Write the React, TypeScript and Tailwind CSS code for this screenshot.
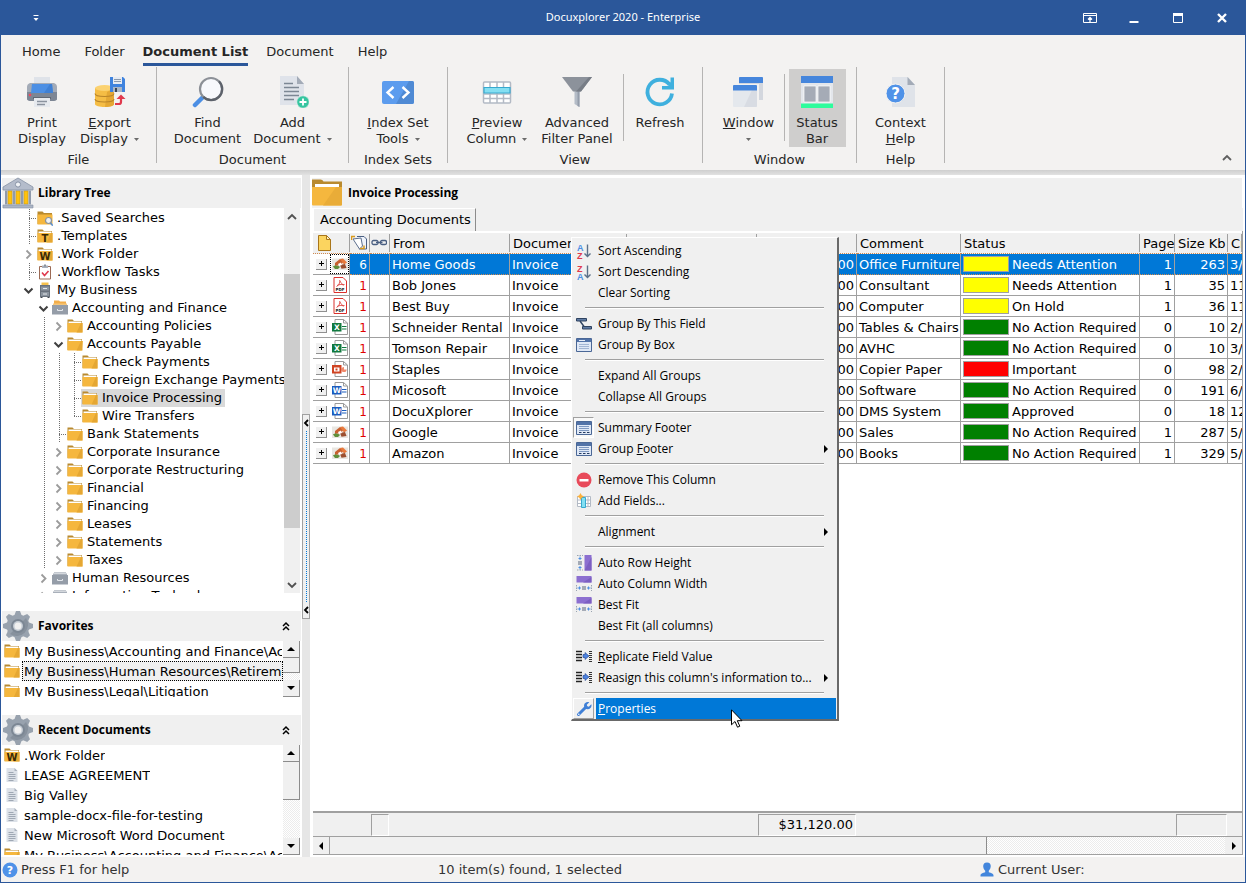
import type { ReactNode } from "react"
import clsx from "clsx"

/* ---------- icons ---------- */

interface IconProps {
  className?: string;
}

function FolderIcon({ className = "size-4", letter, open }: IconProps & { letter?: string; open?: boolean }) {
  return (
    <svg viewBox="0 0 16 16" className={clsx("shrink-0", className)} aria-hidden="true">
      <path d="M.5 1.500h5l1.500 1.500h8v11h-14.500z" fill="#b98a2f" />
      <path d="M1.500 3.500h13v3h-13z" fill="#fff" />
      <path d={open ? "M.5 5h15.300l-1 9.500h-14.300z" : "M.5 5h15v9.500h-15z"} fill="#f5b73e" />
      <path d="M9.500 14.500 14 5h1.500v9.500z" fill="#e5a733" />
      {letter && (
        <text x="8" y="13.500" fontSize="10" fontWeight="bold" textAnchor="middle" fill="#3a2a05" fontFamily="DejaVu Sans">
          {letter}
        </text>
      )}
    </svg>
  )
}

function BigFolderIcon() {
  return (
    <svg viewBox="0 0 32 32" className="size-8 shrink-0" aria-hidden="true">
      <path d="M0 2.500h8.500q2 0 3 2H30v8H0z" fill="#b98a2f" />
      <path d="M3 7h24v6H3z" fill="#fff" />
      <path d="M0 10h30v17.500q0 1-1 1H1q-1 0-1-1z" fill="#f5b73e" />
      <path d="M11 28.500 24 10h6v17.500q0 1-1 1z" fill="#e9ac38" />
    </svg>
  )
}

function SearchFolderIcon() {
  return (
    <svg viewBox="0 0 16 16" className="size-4 shrink-0" aria-hidden="true">
      <path d="M.5 1.500h5L7 3h8v11H.5z" fill="#b98a2f" />
      <path d="M.5 4.500h15v10H.5z" fill="#f5b73e" />
      <circle cx="11.500" cy="10.500" r="3" fill="#eef2f6" stroke="#8a929c" strokeWidth="1.200" />
      <path d="m13.500 13 2.300 2.600" stroke="#5b8fd0" strokeWidth="1.600" />
    </svg>
  )
}

function TaskIcon() {
  return (
    <svg viewBox="0 0 16 16" className="size-4 shrink-0" aria-hidden="true">
      <path d="M2.500 2.500h11v12.500h-11z" fill="#fff" stroke="#9b6a55" />
      <path d="M5 1.500h6v2.500H5z" fill="#a9b0ba" />
      <path d="M7 .5h2v2H7z" fill="#8a929c" />
      <path d="m5 8.500 2.500 3 4-4.500" fill="none" stroke="#e0394d" strokeWidth="1.600" />
    </svg>
  )
}

function CabinetIcon() {
  return (
    <svg viewBox="0 0 16 16" className="size-4 shrink-0" aria-hidden="true">
      <path d="M4.500.5h7v3h-7z" fill="#f5c04d" />
      <path d="M3 3h10v12H3z" fill="#68717c" />
      <path d="M4 4.500h8v4H4zM4 10h8v4H4z" fill="#8b949f" />
      <path d="M6 6h4v1H6zM6 11.500h4v1H6z" fill="#e3e7ec" />
      <path d="M3.500 15h2v1h-2zM10.500 15h2v1h-2z" fill="#40464e" />
    </svg>
  )
}

function DrawerIcon({ open }: { open?: boolean }) {
  return (
    <svg viewBox="0 0 16 16" className="size-4 shrink-0" aria-hidden="true">
      {open ? <path d="M2 .5h5l1 1h6v3H2z" fill="#f3ae4a" /> : <path d="M2 2h12v1H2z" fill="#c3c8cf" />}
      <path d="M1 3.500h14v2H1z" fill={open ? "#f5c67a" : "#a9b0ba"} />
      <path d="M0 5h16v9.500H0z" fill="#959da8" />
      <path d="M5.500 9v1.500h5V9" fill="none" stroke="#e3e7ec" />
    </svg>
  )
}

function DocIcon() {
  return (
    <svg viewBox="0 0 16 16" className="size-4 shrink-0" aria-hidden="true">
      <path d="M2.500 1h8l3 3v11h-11z" fill="#dce1e8" />
      <path d="M10.500 1v3h3z" fill="#aab2bd" />
      <path d="M4.500 5.500h5M4.500 7.500h7M4.500 9.500h7M4.500 11.500h7M4.500 13.500h5" stroke="#8f99a6" strokeWidth=".8" />
    </svg>
  )
}

function BankIcon() {
  return (
    <svg viewBox="0 0 32 32" className="size-8 shrink-0" aria-hidden="true">
      <path d="M3 12h26v16H3z" fill="#c3cad6" />
      <path d="M16 1 31 10v3H1v-3z" fill="#b4bccb" stroke="#8792a5" strokeWidth=".8" />
      <circle cx="16" cy="7.500" r="2.600" fill="#eff2f6" stroke="#8792a5" />
      <path d="M6 14h4v13H6zM14 14h4v13h-4zM22 14h4v13h-4z" fill="#ffc20d" stroke="#c79a20" strokeWidth=".6" />
      <path d="M3 14h2v13H3zM11 14h2v13h-2zM19 14h2v13h-2zM27 14h2v13h-2z" fill="#8f9aac" />
      <path d="M1 28h30v3H1z" fill="#aab4c4" stroke="#8792a5" strokeWidth=".6" />
    </svg>
  )
}

function GearIcon() {
  return (
    <svg viewBox="0 0 32 32" className="size-8 shrink-0" aria-hidden="true">
      {[0, 45, 90, 135].map((angle) => (
        <path key={angle} d="m12.500 5 1.500-4h4l1.500 4v22L18 31h-4l-1.500-4z" fill="#98a2ae" transform={`rotate(${angle} 16 16)`} />
      ))}
      <circle cx="16" cy="16" r="11.500" fill="#98a2ae" />
      <path d="m8 24 16-16a11.500 11.500 0 0 1-16 16z" fill="#87919d" />
      <circle cx="16" cy="16" r="7" fill="#7c8794" />
      <circle cx="16" cy="16" r="5" fill="#c5ccd4" />
      <circle cx="16" cy="16" r="3.500" fill="#f0f0f0" />
    </svg>
  )
}

function PrinterIcon() {
  return (
    <svg viewBox="0 0 32 32" className="size-8" aria-hidden="true">
      <path d="M8 1h16v9H8z" fill="#dfe3e9" />
      <path d="M4 7h24q3 1 3 4v13H1V11q0-3 3-4z" fill="#a3abb7" />
      <path d="M1 16h30v6q0 3-3 3H4q-3 0-3-3z" fill="#7d8694" />
      <path d="M6 8h20l1 9H5z" fill="#4c8fe4" />
      <path d="m18 17 6-9h2l1 9z" fill="#3f80d4" />
      <circle cx="4" cy="19" r="1.300" fill="#f3455c" />
      <path d="M7 21h18v2H7z" fill="#5f6875" />
      <path d="M8 22h16v9H8z" fill="#e6e9ee" />
      <path d="M11 25.500h10M11 28.500h8" stroke="#8a929e" strokeWidth="1.300" />
    </svg>
  )
}

function ExportIcon() {
  return (
    <svg viewBox="0 0 32 32" className="size-8" aria-hidden="true">
      <path d="M1 12v16c0 4 19 4 19 0V12z" fill="#f5bd45" />
      <path d="M11 31c5 0 9-1 9-3V12l-7 4z" fill="#e4a834" />
      <ellipse cx="10.500" cy="12" rx="9.500" ry="3" fill="#fbd271" />
      <path d="M1 17.500c0 4 19 4 19 0M1 23c0 4 19 4 19 0" fill="none" stroke="#b9852a" strokeWidth="1.100" />
      <path d="M16 1h13l2 2v13H16z" fill="#3f83de" />
      <path d="M19 1h9v7h-9z" fill="#e6ebf2" />
      <path d="M20 3.500h7M20 5.500h7" stroke="#8a99ad" />
      <path d="M19 11h9v5h-9z" fill="#aab6c6" />
      <path d="M21 12h2v4h-2z" fill="#3b4654" />
      <path d="M21 28h4q2 0 2-2v-5" fill="none" stroke="#e0394d" strokeWidth="2.200" />
      <path d="m22.500 23 4.500-4.500 4.500 4.500z" fill="#e0394d" />
    </svg>
  )
}

function FindIcon() {
  return (
    <svg viewBox="0 0 32 32" className="size-8" aria-hidden="true">
      <path d="m10 22-7 7" stroke="#4c8fe4" strokeWidth="4.500" strokeLinecap="round" />
      <circle cx="19" cy="13" r="11" fill="#f7f8fc" stroke="#8c9097" strokeWidth="2.200" />
      <path d="M27 5.200A11 11 0 0 1 11.300 20.900" fill="none" stroke="#5d626b" strokeWidth="2.200" />
    </svg>
  )
}

function AddDocIcon() {
  return (
    <svg viewBox="0 0 32 32" className="size-8" aria-hidden="true">
      <path d="M3 0h17l7 8v21H3z" fill="#dfe3ea" />
      <path d="M20 0v8h7z" fill="#a3abb7" />
      <path d="M7 7.500h9M7 11.500h15M7 15.500h15M7 19.500h15M7 23.500h10" stroke="#7c8794" strokeWidth="1.600" />
      <circle cx="26" cy="26" r="6.200" fill="#36c5a0" stroke="#f3f2f1" strokeWidth=".6" />
      <path d="M26 22.500v7M22.500 26h7" stroke="#fff" strokeWidth="1.800" />
    </svg>
  )
}

function CodeIcon() {
  return (
    <svg viewBox="0 0 32 32" className="size-8" aria-hidden="true">
      <rect x="0" y="5" width="32" height="23" rx="2" fill="#5c9cee" />
      <path d="M14 28 27 5h3q2 0 2 2v19q0 2-2 2z" fill="#4f8ad4" />
      <path d="m11.500 11-6 5.500 6 5.500M20.500 11l6 5.500-6 5.500" fill="none" stroke="#fff" strokeWidth="2.400" />
    </svg>
  )
}

function GridIcon() {
  return (
    <svg viewBox="0 0 32 32" className="size-8" aria-hidden="true">
      <rect x="2.500" y="6" width="27" height="21" rx="1" fill="#fff" stroke="#b3bac5" strokeWidth="1.500" />
      <path d="M9 6v21M16 6v21M22.500 6v21M3 18h27M3 22.500h27" stroke="#b3bac5" strokeWidth="1.500" />
      <path d="M3 11.500h26V17H3z" fill="#84dff2" stroke="#37a9cf" strokeWidth="1.200" />
    </svg>
  )
}

function FunnelIcon() {
  return (
    <svg viewBox="0 0 32 32" className="size-8" aria-hidden="true">
      <path d="M13.500 14h5v17l-5-3z" fill="#b4bcc7" />
      <path d="M16.500 14h2v17l-2-1z" fill="#949dab" />
      <path d="M1 1h30l-11 14.500h-8z" fill="#8c929b" />
      <path d="M31 1H28L15 15.500h5z" fill="#777d86" />
    </svg>
  )
}

function RefreshIcon() {
  return (
    <svg viewBox="0 0 32 32" className="size-8" aria-hidden="true">
      <path d="M28 17.500A12.300 12.300 0 1 1 25.500 8.500" fill="none" stroke="#3fb0de" strokeWidth="3.800" />
      <path d="M30 1.500v12H18V10h6l2.500-4V1.500z" fill="#3fb0de" />
    </svg>
  )
}

function WindowsIcon() {
  return (
    <svg viewBox="0 0 32 32" className="size-8" aria-hidden="true">
      <path d="M6 2q0-1 1-1h22q1 0 1 1v22H6z" fill="#d3d7de" />
      <path d="M6 2q0-1 1-1h22q1 0 1 1v5H6z" fill="#4686dc" />
      <path d="M0 8h26v24H0z" fill="#f3f2f1" />
      <path d="M0 10q0-1 1-1h22q1 0 1 1v20q0 1-1 1H1q-1 0-1-1z" fill="#e4e8ed" />
      <path d="m11 31 8-17h5v16q0 1-1 1z" fill="#d8dce3" />
      <path d="M0 10q0-1 1-1h22q1 0 1 1v4.500H0z" fill="#4686dc" />
    </svg>
  )
}

function StatusBarIcon() {
  return (
    <svg viewBox="0 0 32 32" className="size-8" aria-hidden="true">
      <path d="M0 1h32v31H0z" fill="#e3e6eb" />
      <path d="M0 0h32v7H0z" fill="#4686dc" />
      <path d="M3 10h12v16H3zM17 10h12v16H17z" fill="#a5abb6" stroke="#fff" strokeWidth=".7" />
      <path d="M0 27.500h32V32H0z" fill="#2dfc9c" />
    </svg>
  )
}

function ContextHelpIcon() {
  return (
    <svg viewBox="0 0 32 32" className="size-8" aria-hidden="true">
      <path d="M7 1h16l7 8v22H7z" fill="#dfe3e9" />
      <path d="M22.500 1v8H30z" fill="#a3abb7" />
      <circle cx="10.500" cy="17.500" r="9.500" fill="#4f92e8" stroke="#f3f2f1" />
      <text x="10.500" y="23" fontSize="15" fontWeight="bold" textAnchor="middle" fill="#fff" fontFamily="DejaVu Sans">?</text>
    </svg>
  )
}

function HelpIcon() {
  return (
    <svg viewBox="0 0 16 16" className="size-4 shrink-0" aria-hidden="true">
      <circle cx="8" cy="8" r="7.500" fill="#4f92e8" />
      <text x="8" y="12" fontSize="11" fontWeight="bold" textAnchor="middle" fill="#fff" fontFamily="DejaVu Sans">?</text>
    </svg>
  )
}

function UserIcon() {
  return (
    <svg viewBox="0 0 16 16" className="size-4 shrink-0" aria-hidden="true">
      <path d="M8 .5c5.500 0 4 6.500 1.800 8.200v1.500c2.200.8 4.700 1.300 4.700 3.300v1h-13v-1c0-2 2.500-2.500 4.700-3.300V8.700C4 7 2.500.5 8 .5z" fill="#4386dc" />
    </svg>
  )
}

function Chevron({ dir, className }: { dir: "up" | "down" | "right" | "left"; className?: string }) {
  const paths = {
    up: "m4 10 4-4 4 4",
    down: "m4 6 4 4 4-4",
    right: "m6 4 4 4-4 4",
    left: "m10 5-3 3 3 3",
  }
  return (
    <svg viewBox="0 0 16 16" className={clsx("size-4 shrink-0", className)} aria-hidden="true">
      <path d={paths[dir]} fill="none" stroke="currentColor" strokeWidth="1.800" />
    </svg>
  )
}

function Triangle({ dir }: { dir: "up" | "down" | "right" | "left" }) {
  const paths = {
    up: "M0 6h8L4 2z",
    down: "M0 2h8L4 6z",
    right: "M2 0v8l4-4z",
    left: "M6 0v8L2 4z",
  }
  return (
    <svg viewBox="0 0 8 8" className="size-2 shrink-0" aria-hidden="true">
      <path d={paths[dir]} fill="currentColor" />
    </svg>
  )
}

function DropArrow({ className }: IconProps) {
  return (
    <svg viewBox="0 0 5 3" className={clsx("inline-block h-[3px] w-[5px] align-middle", className)} aria-hidden="true">
      <path d="M0 0h5L2.500 3z" fill="#6b6b6b" />
    </svg>
  )
}

/* ---------- grid file icons ---------- */

function PhotoIcon() {
  return (
    <svg viewBox="0 0 16 16" className="size-4" aria-hidden="true">
      <path d="M0 2.500h16V14H0z" fill="#e9e6e1" />
      <path d="m3 7 5-4 4 2-3 4-6 1z" fill="#c8602f" />
      <path d="m8 3 3-.5 4 4-3 2z" fill="#e8793c" />
      <path d="M1 10.500c2-2 6-1 7 .5l-2 2H3z" fill="#5f8f3a" />
      <path d="m8 9 5-1 1.500 4-5 .8z" fill="#9c4f30" />
      <path d="m6 8 3-1.500 1 2.500-3 1z" fill="#fff" />
    </svg>
  )
}

function PdfIcon() {
  return (
    <svg viewBox="0 0 16 16" className="size-4" aria-hidden="true">
      <path d="M2 .5h9l3.500 3.500v11.500H2z" fill="#fff" stroke="#d9302c" />
      <path d="M7.500 3c2 4 3 5 5 4.500M8 4c-.5 3-2 5-3.500 5.500M5 8.500c2-1 4-1.500 7-.5" fill="none" stroke="#d9302c" strokeWidth=".8" />
      <text x="8" y="14" fontSize="4" fontWeight="bold" textAnchor="middle" fill="#222" fontFamily="DejaVu Sans">PDF</text>
    </svg>
  )
}

function OfficeIcon({ color, letter }: { color: string; letter: string }) {
  return (
    <svg viewBox="0 0 16 16" className="size-4" aria-hidden="true">
      <path d="M3 .5h8.500L15.500 4v11.500H3z" fill="#fff" stroke="#9a9a9a" />
      <path d="M11.500.5V4h4" fill="none" stroke="#9a9a9a" />
      <path d="M10 7.500h4.500M10 10h4.500" stroke={color} strokeWidth="1.200" />
      <path d="M0 4h9.500v8.500H0z" fill={color} />
      <text x="4.800" y="11" fontSize="7.500" fontWeight="bold" textAnchor="middle" fill="#fff" fontFamily="DejaVu Sans">{letter}</text>
    </svg>
  )
}

function SlidesIcon() {
  return (
    <svg viewBox="0 0 16 16" className="size-4" aria-hidden="true">
      <path d="M3 .5h8.500L15.500 4v11.500H3z" fill="#fff" stroke="#9a9a9a" />
      <path d="M11.500.5V4h4" fill="none" stroke="#9a9a9a" />
      <circle cx="12" cy="8.500" r="2.600" fill="#f08a6c" />
      <path d="M12 8.500V5.500h3v3z" fill="#fff" />
      <path d="M0 4h9.500v8.500H0z" fill="#d04423" />
      <path d="M2 6.500h5.500v4H2z" fill="#fff" />
      <path d="M3.500 7.500h2v2h-2z" fill="#d04423" />
    </svg>
  )
}

const fileIcons: Record<string, ReactNode> = {
  photo: <PhotoIcon />,
  pdf: <PdfIcon />,
  excel: <OfficeIcon color="#10793f" letter="X" />,
  slides: <SlidesIcon />,
  word: <OfficeIcon color="#1b5cbe" letter="W" />,
}

/* ---------- context menu icons ---------- */

function SortIcon({ desc }: { desc?: boolean }) {
  return (
    <svg viewBox="0 0 16 16" className="size-4" aria-hidden="true">
      <text x="1" y="7.500" fontSize="9" fontWeight="bold" fill={desc ? "#e0394d" : "#4c8fe4"} fontFamily="Liberation Sans">{desc ? "Z" : "A"}</text>
      <text x="1" y="15.500" fontSize="9" fontWeight="bold" fill={desc ? "#4c8fe4" : "#e0394d"} fontFamily="Liberation Sans">{desc ? "A" : "Z"}</text>
      <path d="M11.500 1.500v12M8.500 10.500l3 3 3-3" fill="none" stroke="#5b7089" strokeWidth="1.400" />
    </svg>
  )
}

function GroupFieldIcon() {
  return (
    <svg viewBox="0 0 16 16" className="size-4" aria-hidden="true">
      <path d="M.5 2.500h10v2.500H.5zM6.500 10.500h9V13h-9z" fill="#5f7ba3" stroke="#2f4260" />
      <path d="m4 5 4 5.500" stroke="#2f4260" strokeWidth="1.400" />
    </svg>
  )
}

function PanelIcon({ footer }: { footer?: boolean }) {
  return (
    <svg viewBox="0 0 16 16" className="size-4" aria-hidden="true">
      <path d="M.5 1.500h15v13H.5z" fill="#dfe8f6" stroke="#4a6796" />
      <path d="M1 2h14v3H1z" fill="#5273a8" />
      {footer ? (
        <>
          <path d="M3 6.500h10M3 8.500h10M3 10.500h10" stroke="#7d97c0" />
          <path d="M3 12.500h2.500M7 12.500h2.500M11 12.500h2.500" stroke="#23395f" />
        </>
      ) : (
        <>
          <path d="M3 3.500h6" stroke="#e8eef8" />
          <path d="M3 7.500h10M3 9.500h10M3 11.500h10" stroke="#a3b6d4" />
        </>
      )}
    </svg>
  )
}

function RemoveIcon() {
  return (
    <svg viewBox="0 0 16 16" className="size-4" aria-hidden="true">
      <circle cx="8" cy="8" r="7.500" fill="#e84a5a" />
      <path d="M3.500 7h9v2.500h-9z" fill="#fff" />
    </svg>
  )
}

function AddFieldsIcon() {
  return (
    <svg viewBox="0 0 16 16" className="size-4" aria-hidden="true">
      <path d="M1.500 3.500h13v10h-13zM1.500 7h13M1.500 10.500h13M12 3.500v10" fill="#fff" stroke="#b3bac5" />
      <path d="M5.500 4.500h4v10h-4z" fill="#84dff2" stroke="#37a9cf" />
      <path d="m4.500 0 1.200 2.300L8 3.500 5.700 4.700 4.500 7 3.300 4.700 1 3.500l2.300-1.200z" fill="#fbb03b" />
    </svg>
  )
}

function RowHeightIcon() {
  return (
    <svg viewBox="0 0 16 16" className="size-4" aria-hidden="true">
      <path d="M8.500 0h7v15.500h-7z" fill="#8c6fd0" />
      <path d="M8.500 15.500 15.500 2v13.500z" fill="#7c5fc2" />
      <path d="M1 .5h6M1 15h6" stroke="#9aa4b0" strokeDasharray="1.500 1" />
      <path d="M2 6h4v4H2z" fill="#a5abb6" />
      <path d="M4 1.500V5M4 11v3.500M2.500 3.500h3M2.500 12.500h3" stroke="#4c8fe4" />
    </svg>
  )
}

function ColumnWidthIcon() {
  return (
    <svg viewBox="0 0 16 16" className="size-4" aria-hidden="true">
      <path d="M.5 0h15v6.500H.5z" fill="#8c6fd0" />
      <path d="M7 6.500 15.500 1v5.500z" fill="#7c5fc2" />
      <path d="M.5 9v6M15.500 9v6" stroke="#9aa4b0" strokeDasharray="1.500 1" />
      <path d="M6 10h4v4H6z" fill="#a5abb6" />
      <path d="M1.500 12H5M11 12h3.500M3.500 10.500v3M12.500 10.500v3" stroke="#4c8fe4" />
    </svg>
  )
}

function ReplicateIcon() {
  return (
    <svg viewBox="0 0 16 16" className="size-4" aria-hidden="true">
      <path d="M0 2.500h6M0 5.500h6M0 8.500h6M0 11.500h6" stroke="#222" strokeWidth="1.300" />
      <path d="M13 2.500h3M13 4.500h3M13 6.500h3M13 8.500h3M13 10.500h3M13 12.500h3" stroke="#333" />
      <path d="M7 5.500h2V3.500l4 3.500-4 3.500v-2H7z" fill="#4d83e0" stroke="#1d3f8e" strokeWidth=".6" />
    </svg>
  )
}

function WrenchIcon() {
  return (
    <svg viewBox="0 0 16 16" className="size-4" aria-hidden="true">
      <path d="M2.500 13.500 10 6" stroke="#3f7fd6" strokeWidth="3" strokeLinecap="round" />
      <path d="M13.300 1.200 10.800 3.700l.4 1.600 1.600.4 2.500-2.500c.9 2.700-1 5-3.600 5-2.300 0-4-2-3.600-4.200.3-2.300 2.700-3.800 5.200-2.800z" fill="#3f7fd6" />
      <circle cx="2.800" cy="13.200" r=".8" fill="#fff" />
    </svg>
  )
}

/* ---------- ribbon ---------- */

const ribbonTabs = ["Home", "Folder", "Document List", "Document", "Help"]

interface RibbonButtonProps {
  icon: ReactNode;
  children: ReactNode;
  className: string;
  active?: boolean;
}

function RibbonButton({ icon, children, className, active }: RibbonButtonProps) {
  return (
    <button
      type="button"
      aria-pressed={active}
      className={clsx("flex h-[78px] shrink-0 flex-col items-center pt-[7px] leading-4 whitespace-nowrap", active && "bg-[#cfcecd]", className)}
    >
      {icon}
      <span className="mt-[7px] text-center">{children}</span>
    </button>
  )
}

function RibbonGroup({ label, className, children }: { label: string; className: string; children: ReactNode }) {
  return (
    <>
      <section aria-label={label} className={clsx("flex shrink-0 flex-col", className)}>
        <div className="flex justify-center pt-0.5">{children}</div>
        <span className="mt-[5px] text-center leading-4">{label}</span>
      </section>
      <div className="h-24 w-px shrink-0 bg-[#b5b4b3]" />
    </>
  )
}

function RibbonDivider({ className }: IconProps) {
  return <div className={clsx("mt-[5px] h-[67px] w-px shrink-0 bg-[#b5b4b3]", className)} />
}

function Ribbon() {
  return (
    <header className="shrink-0 bg-[#f3f2f1] text-[#262626]">
      <nav className="flex h-8 items-center pl-[9px]">
        {ribbonTabs.map((tab) => {
          const selected = tab === "Document List"
          return (
            <button key={tab} type="button" className={clsx("h-8 pt-0.5", selected ? "px-1.5 font-bold" : "px-3")}>
              <span className={clsx("block h-7 leading-7", selected && "border-b-[3px] border-[#2b579a]")}>{tab}</span>
            </button>
          )
        })}
      </nav>
      <div className="flex h-[103px]">
        <RibbonGroup label="File" className="w-[155px]">
          <RibbonButton icon={<PrinterIcon />} className="w-[62px]">Print<br />Display</RibbonButton>
          <RibbonButton icon={<ExportIcon />} className="w-[73px]"><u>E</u>xport<br />Display <DropArrow className="ml-0.5" /></RibbonButton>
        </RibbonGroup>
        <RibbonGroup label="Document" className="w-[191px]">
          <RibbonButton icon={<FindIcon />} className="w-[80px]">Find<br />Document</RibbonButton>
          <RibbonButton icon={<AddDocIcon />} className="w-[90px]">Add<br />Document <DropArrow className="ml-0.5" /></RibbonButton>
        </RibbonGroup>
        <RibbonGroup label="Index Sets" className="w-[98px]">
          <RibbonButton icon={<CodeIcon />} className="w-[74px]"><u>I</u>ndex Set<br />Tools <DropArrow className="ml-0.5" /></RibbonButton>
        </RibbonGroup>
        <RibbonGroup label="View" className="w-[254px]">
          <RibbonButton icon={<GridIcon />} className="w-[76px]"><u>P</u>review<br />Column <DropArrow className="ml-0.5" /></RibbonButton>
          <RibbonButton icon={<FunnelIcon />} className="w-[84px]">Advanced<br />Filter Panel</RibbonButton>
          <RibbonDivider className="ml-1" />
          <RibbonButton icon={<RefreshIcon />} className="w-[67px] pl-[5px]">Refresh</RibbonButton>
        </RibbonGroup>
        <RibbonGroup label="Window" className="w-[153px]">
          <RibbonButton icon={<WindowsIcon />} className="w-[70px]"><u>W</u>indow<br /><DropArrow /></RibbonButton>
          <RibbonDivider className="mr-1" />
          <RibbonButton icon={<StatusBarIcon />} className="w-[57px]" active>Status<br />Bar</RibbonButton>
        </RibbonGroup>
        <RibbonGroup label="Help" className="w-[87px]">
          <RibbonButton icon={<ContextHelpIcon />} className="w-[60px]">Context<br /><u>H</u>elp</RibbonButton>
        </RibbonGroup>
        <button type="button" aria-label="Collapse ribbon" className="mr-2.5 mb-1 ml-auto self-end text-[#5f5f5f]">
          <Chevron dir="up" />
        </button>
      </div>
      <div className="h-[5px] bg-linear-to-b from-[#cfcfcf] to-[#e2e2e2]" />
    </header>
  )
}

/* ---------- sidebar ---------- */

// guides: one letter per tree level, "|" line, "+" branch, "L" last branch, ">" collapsed, "v" expanded, " " blank
const treeRows: { guides: string; icon: ReactNode; label: string; selected?: boolean }[] = [
  { guides: "+", icon: <SearchFolderIcon />, label: ".Saved Searches" },
  { guides: "+", icon: <FolderIcon letter="T" />, label: ".Templates" },
  { guides: ">", icon: <FolderIcon letter="W" />, label: ".Work Folder" },
  { guides: "+", icon: <TaskIcon />, label: ".Workflow Tasks" },
  { guides: "v", icon: <CabinetIcon />, label: "My Business" },
  { guides: " v", icon: <DrawerIcon open />, label: "Accounting and Finance" },
  { guides: " |>", icon: <FolderIcon />, label: "Accounting Policies" },
  { guides: " |v", icon: <FolderIcon open />, label: "Accounts Payable" },
  { guides: " ||+", icon: <FolderIcon />, label: "Check Payments" },
  { guides: " ||+", icon: <FolderIcon />, label: "Foreign Exchange Payments" },
  { guides: " ||+", icon: <FolderIcon />, label: "Invoice Processing", selected: true },
  { guides: " ||L", icon: <FolderIcon />, label: "Wire Transfers" },
  { guides: " |+", icon: <FolderIcon />, label: "Bank Statements" },
  { guides: " |>", icon: <FolderIcon />, label: "Corporate Insurance" },
  { guides: " |>", icon: <FolderIcon />, label: "Corporate Restructuring" },
  { guides: " |>", icon: <FolderIcon />, label: "Financial" },
  { guides: " |>", icon: <FolderIcon />, label: "Financing" },
  { guides: " |>", icon: <FolderIcon />, label: "Leases" },
  { guides: " |>", icon: <FolderIcon />, label: "Statements" },
  { guides: " |>", icon: <FolderIcon />, label: "Taxes" },
  { guides: " >", icon: <DrawerIcon />, label: "Human Resources" },
  { guides: " >", icon: <DrawerIcon />, label: "Information Technology" },
]

function TreeGuide({ kind }: { kind: string }) {
  return (
    <svg viewBox="0 0 15 18" className="h-[18px] w-[15px] shrink-0" aria-hidden="true">
      {(kind === "|" || kind === "+") && <path d="M8.500 0v18" stroke="#6e6e6e" strokeDasharray="1 1" />}
      {kind === "L" && <path d="M8.500 0v10" stroke="#6e6e6e" strokeDasharray="1 1" />}
      {(kind === "+" || kind === "L") && <path d="M8 9.500h7" stroke="#6e6e6e" strokeDasharray="1 1" />}
      {kind === ">" && <path d="m5.500 5.500 4 4-4 4" fill="none" stroke="#9b9b9b" strokeWidth="1.800" />}
      {kind === "v" && <path d="m3.500 7.500 4 4 4-4" fill="none" stroke="#404040" strokeWidth="2" />}
    </svg>
  )
}

function PanelHeader({ icon, title, collapsible }: { icon: ReactNode; title: string; collapsible?: boolean }) {
  return (
    <div className="mx-px flex h-[30px] shrink-0 items-center bg-[#f0f0f0] font-['Open_Sans',sans-serif] text-xs font-bold text-black">
      {icon}
      <h2 className="ml-1 flex-1">{title}</h2>
      {collapsible && (
        <button type="button" aria-label={`Collapse ${title}`} className="mr-[7px]">
          <svg viewBox="0 0 16 16" className="size-4" aria-hidden="true">
            <path d="m5 8 3-3 3 3M5 12l3-3 3 3" fill="none" stroke="#000" strokeWidth="1.500" />
          </svg>
        </button>
      )}
    </div>
  )
}

function ClassicScrollbar({ thumb }: { thumb: string }) {
  return (
    <div className="mr-0.5 flex w-[17px] shrink-0 flex-col bg-[repeating-conic-gradient(#fff_0_25%,#ececec_0_50%)] bg-size-[2px_2px]">
      <button type="button" aria-label="Scroll up" className="flex h-[17px] items-center justify-center border-r border-b border-[#8c8c8c] bg-[#f0f0f0]">
        <Triangle dir="up" />
      </button>
      <div className={clsx("border-r border-b border-[#8c8c8c] bg-[#f0f0f0]", thumb)} />
      <button type="button" aria-label="Scroll down" className="mt-auto flex h-[17px] items-center justify-center border-r border-b border-[#8c8c8c] bg-[#f0f0f0]">
        <Triangle dir="down" />
      </button>
    </div>
  )
}

function LinkList({ rows, thumb, className }: { rows: { icon: ReactNode; label: string; focused?: boolean }[]; thumb: string; className: string }) {
  return (
    <div className={clsx("flex shrink-0", className)}>
      <ul className="min-w-0 flex-1 overflow-hidden">
        {rows.map((row) => (
          <li key={row.label}>
            <button type="button" className="flex h-5 w-full items-center pl-[3px] text-left">
              {row.icon}
              <span
                className={clsx(
                  "ml-0.5 h-5 min-w-0 overflow-hidden border border-dotted pl-px leading-5 whitespace-nowrap",
                  row.focused ? "flex-1 border-black bg-[#f0f0f0]" : "border-transparent"
                )}
              >
                {row.label}
              </span>
            </button>
          </li>
        ))}
      </ul>
      <ClassicScrollbar thumb={thumb} />
    </div>
  )
}

const favorites = [
  { icon: <FolderIcon />, label: "My Business\\Accounting and Finance\\Accounts Payable" },
  { icon: <FolderIcon />, label: "My Business\\Human Resources\\Retirement", focused: true },
  { icon: <FolderIcon />, label: "My Business\\Legal\\Litigation" },
]

const recentDocuments = [
  { icon: <FolderIcon letter="W" />, label: ".Work Folder" },
  { icon: <DocIcon />, label: "LEASE AGREEMENT" },
  { icon: <DocIcon />, label: "Big Valley" },
  { icon: <DocIcon />, label: "sample-docx-file-for-testing" },
  { icon: <DocIcon />, label: "New Microsoft Word Document" },
  { icon: <FolderIcon />, label: "My Business\\Accounting and Finance\\Accounts Payable" },
]

function Sidebar() {
  return (
    <aside className="flex w-[301px] shrink-0 flex-col bg-white pt-[3px] pb-0.5 text-black">
      <PanelHeader icon={<BankIcon />} title="Library Tree" />
      <div className="flex min-h-0 flex-1">
        <ul role="tree" className="min-w-0 flex-1 overflow-hidden pt-px pl-5">
          {treeRows.map((row) => (
            <li key={row.label} role="treeitem" aria-selected={row.selected} className="flex h-[18px] whitespace-nowrap">
              {row.guides.split("").map((kind, i) => (
                <TreeGuide key={i} kind={kind} />
              ))}
              <span className={clsx("flex items-center gap-1 pl-px leading-[18px]", row.selected && "bg-[#d9d9d9] pr-[3px]")}>
                {row.icon}
                {row.label}
              </span>
            </li>
          ))}
        </ul>
        <div className="mr-0.5 flex w-4 shrink-0 flex-col items-center bg-[#f0f0f0] pt-px text-[#505050]">
          <button type="button" aria-label="Scroll tree up" className="mb-[49px]">
            <Chevron dir="up" />
          </button>
          <div className="h-[254px] w-full bg-[#cdcdcd]" />
          <button type="button" aria-label="Scroll tree down" className="mt-auto">
            <Chevron dir="down" />
          </button>
        </div>
      </div>
      <div className="h-[18px] shrink-0" />
      <PanelHeader icon={<GearIcon />} title="Favorites" collapsible />
      <LinkList rows={favorites} thumb="h-[15px]" className="h-14" />
      <div className="h-[18px] shrink-0" />
      <PanelHeader icon={<GearIcon />} title="Recent Documents" collapsible />
      <LinkList rows={recentDocuments} thumb="h-[38px]" className="h-[110px]" />
    </aside>
  )
}

function Splitter() {
  return (
    <div className="flex w-2 shrink-0 flex-col items-center bg-[#e6e6e6]">
      <div className="flex-239" />
      <button type="button" aria-label="Hide sidebar" className="flex h-[205px] w-2 shrink-0 flex-col items-center justify-between border border-[#a0a0a0] bg-[#f0f0f0] text-black">
        <Chevron dir="left" />
        <span className="w-0 flex-1 border-l border-dotted border-[#0078d7]" />
        <Chevron dir="left" />
      </button>
      <div className="flex-238" />
    </div>
  )
}

/* ---------- document grid ---------- */

const columns = [
  { id: "file", className: "w-[37px]" },
  { id: "versions", className: "w-5" },
  { id: "links", className: "w-5" },
  { id: "from", className: "w-[120px]" },
  { id: "document", className: "w-[117px]" },
  { id: "date", className: "w-[130px]" },
  { id: "amount", className: "w-[100px]" },
  { id: "comment", className: "w-[104px]" },
  { id: "status", className: "w-[179px]" },
  { id: "pages", className: "w-[35px]" },
  { id: "size", className: "w-[53px]" },
  { id: "created", className: "" },
]

const headings: ReactNode[] = [
  <svg viewBox="0 0 16 16" className="size-4 shrink-0" aria-label="File">
    <path d="M1.500.5h8l4 4v11h-12z" fill="#fbd45f" stroke="#a9761a" />
    <path d="M9.500.5v4h4z" fill="#fff3c4" stroke="#a9761a" />
  </svg>,
  <svg viewBox="0 0 16 16" className="size-4 shrink-0" aria-label="Versions">
    <path d="M6 1.500h7l2.500 2.500v10H8" fill="#eef3fb" stroke="#4a5f82" />
    <path d="m2 4 8-1 1.500 8-3 3z" fill="#fff" stroke="#5d6f8e" />
    <path d="M.5 5V1.500H4M9 13.500h4v-3" fill="none" stroke="#d99a1c" strokeWidth="1.500" />
  </svg>,
  <svg viewBox="0 0 16 16" className="size-4 shrink-0" aria-label="Links">
    <rect x="1" y="5.500" width="6" height="4" rx="1.500" fill="none" stroke="#4a5f82" strokeWidth="1.300" />
    <rect x="9.500" y="5.500" width="6" height="4" rx="1.500" fill="none" stroke="#4a5f82" strokeWidth="1.300" />
    <path d="M5 7.500h6.500" stroke="#4a5f82" strokeWidth="1.500" />
  </svg>,
  "From",
  "Document",
  "",
  "",
  "Comment",
  "Status",
  "Pages",
  "Size Kb",
  "Created",
]

const swatches = {
  yellow: "bg-[#ffff00]",
  green: "bg-[#008000]",
  red: "bg-[#ff0000]",
}

interface DocumentRow {
  file: string;
  count: number;
  from: string;
  comment: string;
  color: keyof typeof swatches;
  status: string;
  pages: number;
  size: number;
  created: string;
}

const documents: DocumentRow[] = [
  { file: "photo", count: 6, from: "Home Goods", comment: "Office Furniture", color: "yellow", status: "Needs Attention", pages: 1, size: 263, created: "3/" },
  { file: "pdf", count: 1, from: "Bob Jones", comment: "Consultant", color: "yellow", status: "Needs Attention", pages: 1, size: 35, created: "11/" },
  { file: "pdf", count: 1, from: "Best Buy", comment: "Computer", color: "yellow", status: "On Hold", pages: 1, size: 36, created: "11/" },
  { file: "excel", count: 1, from: "Schneider Rental", comment: "Tables & Chairs", color: "green", status: "No Action Required", pages: 0, size: 10, created: "2/" },
  { file: "excel", count: 1, from: "Tomson Repair", comment: "AVHC", color: "green", status: "No Action Required", pages: 0, size: 10, created: "3/" },
  { file: "slides", count: 1, from: "Staples", comment: "Copier Paper", color: "red", status: "Important", pages: 0, size: 98, created: "2/" },
  { file: "word", count: 1, from: "Micosoft", comment: "Software", color: "green", status: "No Action Required", pages: 0, size: 191, created: "6/" },
  { file: "word", count: 1, from: "DocuXplorer", comment: "DMS System", color: "green", status: "Approved", pages: 0, size: 18, created: "12/" },
  { file: "photo", count: 1, from: "Google", comment: "Sales", color: "green", status: "No Action Required", pages: 1, size: 287, created: "5/" },
  { file: "photo", count: 1, from: "Amazon", comment: "Books", color: "green", status: "No Action Required", pages: 1, size: 329, created: "5/" },
]

function Cell({ children, className, selected, flush }: { children?: ReactNode; className?: string; selected?: boolean; flush?: boolean }) {
  return (
    <td
      className={clsx(
        "h-[21px] overflow-hidden border-r border-b border-[#a0a0a0] whitespace-nowrap last:border-r-0",
        flush ? "p-0" : "px-0.5 pt-0.5 pb-0 leading-[18px]",
        selected && "border-b-[#d08a50] bg-[#0078d7] text-white [border-bottom-style:dotted]",
        className
      )}
    >
      {children}
    </td>
  )
}

function DocumentTable() {
  return (
    <table className="w-full table-fixed border-separate border-spacing-0">
      <colgroup>
        {columns.map((column) => (
          <col key={column.id} className={column.className} />
        ))}
      </colgroup>
      <thead>
        <tr>
          {headings.map((heading, i) => (
            <th key={columns[i].id} className="h-[21px] overflow-hidden border-b border-dotted border-[#d08a50] bg-[#f0f0f0] p-0 text-left font-normal">
              <span
                className={clsx(
                  "flex h-[18px] overflow-hidden border-r border-[#a0a0a0] whitespace-nowrap",
                  i < 3 ? "items-center" : "pt-0.5 pl-[3px] leading-4",
                  i === 0 && "pl-1",
                  (i === 1 || i === 2) && "pl-px"
                )}
              >
                {heading}
              </span>
            </th>
          ))}
        </tr>
      </thead>
      <tbody>
        {documents.map((doc, i) => {
          const selected = i === 0
          return (
            <tr key={doc.from}>
              <Cell flush>
                <span className="flex h-5 items-center gap-[3px] pl-[3px]">
                  <button type="button" aria-label={`Expand ${doc.from}`} className="flex size-[11px] shrink-0 items-center justify-center border-r border-b border-[#909090] bg-[#f0f0f0]">
                    <svg viewBox="0 0 7 7" className="size-[7px]" aria-hidden="true">
                      <path d="M3.500 1v5M1 3.500h5" stroke="#000" />
                    </svg>
                  </button>
                  <span className={clsx("flex h-5 w-[19px] items-center justify-center border border-dotted", selected ? "border-black" : "border-transparent")}>
                    {fileIcons[doc.file]}
                  </span>
                </span>
              </Cell>
              <Cell selected={selected} className={clsx("text-right text-xs", !selected && "text-[#e00000]")}>{doc.count}</Cell>
              <Cell selected={selected} />
              <Cell selected={selected}>{doc.from}</Cell>
              <Cell selected={selected}>Invoice</Cell>
              <Cell selected={selected} />
              <Cell selected={selected} className="text-right">.00</Cell>
              <Cell selected={selected}>{doc.comment}</Cell>
              <Cell selected={selected} flush>
                <span className="flex h-5 items-center gap-[3px] pl-0.5">
                  <span className={clsx("h-4 w-[46px] shrink-0 border border-[#a0a0a0]", swatches[doc.color])} />
                  <span className="pt-0.5 leading-[18px]">{doc.status}</span>
                </span>
              </Cell>
              <Cell selected={selected} className="text-right">{doc.pages}</Cell>
              <Cell selected={selected} className="text-right">{doc.size}</Cell>
              <Cell selected={selected}>{doc.created}</Cell>
            </tr>
          )
        })}
      </tbody>
    </table>
  )
}

function FooterCell({ className, children }: { className: string; children?: ReactNode }) {
  return (
    <div className={clsx("h-[22px] shrink-0 border border-t-[#a0a0a0] border-r-white border-b-white border-l-[#a0a0a0] pr-0.5 text-right leading-5", className)}>
      {children}
    </div>
  )
}

function GridFooter() {
  return (
    <div className="shrink-0 border-b border-[#a0a0a0]">
      <div className="flex h-[26px] items-center border-t-2 border-b border-[#a0a0a0] bg-[#f0f0f0] pl-[58px]">
        <FooterCell className="w-[18px]" />
        <FooterCell className="ml-[369px] w-[98px]">$31,120.00</FooterCell>
        <FooterCell className="mr-[15px] ml-auto w-[51px]" />
      </div>
      <div className="flex h-[17px] bg-[repeating-conic-gradient(#fff_0_25%,#ececec_0_50%)] bg-size-[2px_2px]">
        <button type="button" aria-label="Scroll left" className="flex w-[17px] items-center justify-center border-r border-[#a0a0a0] bg-[#f0f0f0]">
          <Triangle dir="left" />
        </button>
        <div className="w-[70.7%] border-r border-[#8c8c8c] bg-[#f0f0f0]" />
        <button type="button" aria-label="Scroll right" className="ml-auto flex w-[17px] items-center justify-center bg-[#f0f0f0]">
          <Triangle dir="right" />
        </button>
      </div>
    </div>
  )
}

function MainPanel() {
  return (
    <main className="flex min-w-0 flex-1 flex-col bg-white pt-[3px] pr-0.5 pb-0.5 pl-px text-black">
      <PanelHeader icon={<BigFolderIcon />} title="Invoice Processing" />
      <div className="ml-0.5 flex shrink-0 bg-[#f0f0f0]">
        <button type="button" className="h-[23px] border-t border-r border-l border-t-white border-r-[#8c8c8c] border-l-white pr-1 pl-1.5 leading-5">
          Accounting Documents
        </button>
      </div>
      <div className="ml-0.5 flex min-h-0 flex-1 flex-col border-r border-[#a0a0a0] pt-0.5">
        <div className="min-h-0 flex-1 overflow-hidden">
          <DocumentTable />
        </div>
        <GridFooter />
      </div>
    </main>
  )
}

/* ---------- context menu ---------- */

interface MenuItem {
  label: ReactNode;
  icon?: ReactNode;
  submenu?: boolean;
  checked?: boolean;
  highlighted?: boolean;
}

const menuGroups: MenuItem[][] = [
  [
    { label: "Sort Ascending", icon: <SortIcon /> },
    { label: "Sort Descending", icon: <SortIcon desc /> },
    { label: "Clear Sorting" },
  ],
  [
    { label: "Group By This Field", icon: <GroupFieldIcon /> },
    { label: "Group By Box", icon: <PanelIcon /> },
  ],
  [{ label: "Expand All Groups" }, { label: "Collapse All Groups" }],
  [
    { label: "Summary Footer", icon: <PanelIcon footer />, checked: true },
    { label: <>Group <u>F</u>ooter</>, icon: <PanelIcon footer />, submenu: true },
  ],
  [
    { label: "Remove This Column", icon: <RemoveIcon /> },
    { label: "Add Fields...", icon: <AddFieldsIcon /> },
  ],
  [{ label: "Alignment", submenu: true }],
  [
    { label: "Auto Row Height", icon: <RowHeightIcon /> },
    { label: "Auto Column Width", icon: <ColumnWidthIcon /> },
    { label: "Best Fit", icon: <ColumnWidthIcon /> },
    { label: "Best Fit (all columns)" },
  ],
  [
    { label: <><u>R</u>eplicate Field Value</>, icon: <ReplicateIcon /> },
    { label: "Reasign this column's information to...", icon: <ReplicateIcon />, submenu: true },
  ],
  [{ label: <><u>P</u>roperties</>, icon: <WrenchIcon />, highlighted: true }],
]

function ContextMenu() {
  return (
    <div role="menu" className="absolute top-[237px] left-[570px] w-[268px] border-t border-r-2 border-b-2 border-l border-t-white border-r-[#696969] border-b-[#696969] border-l-white bg-[#f0f0f0] pt-0.5 pr-px pl-px font-['Open_Sans',sans-serif] text-xs text-black">
      {menuGroups.map((group, g) => (
        <div key={g}>
          {g > 0 && (
            <div className="flex h-2.5 items-center pr-3 pl-3">
              <div className="h-0.5 w-full border-t border-b border-t-[#a0a0a0] border-b-white" />
            </div>
          )}
          {group.map((item, i) => (
            <button key={i} type="button" role="menuitem" className="flex h-[21px] w-full items-center text-left">
              <span
                className={clsx(
                  "flex h-[21px] w-[21px] shrink-0 items-center justify-center",
                  item.checked && "border border-t-[#a0a0a0] border-r-white border-b-white border-l-[#a0a0a0] bg-[#f8f8f8]",
                  item.highlighted && "border border-t-white border-r-[#a0a0a0] border-b-[#a0a0a0] border-l-white"
                )}
              >
                {item.icon}
              </span>
              <span className={clsx("ml-0.5 flex h-[21px] flex-1 items-center justify-between pr-1.5 pl-0.5 whitespace-nowrap", item.highlighted && "bg-[#0078d7] text-white")}>
                <span>{item.label}</span>
                {item.submenu && <Triangle dir="right" />}
              </span>
            </button>
          ))}
        </div>
      ))}
      <svg viewBox="0 0 12 19" className="absolute top-[471px] left-[159px] h-[19px] w-3" aria-hidden="true">
        <path d="M.5.8v15l3.500-3.300 2.500 5.700 2.300-1-2.500-5.500H11z" fill="#fff" stroke="#000" />
      </svg>
    </div>
  )
}

/* ---------- window ---------- */

function TitleBar() {
  return (
    <div className="grid h-[35px] shrink-0 grid-cols-[1fr_auto_1fr] items-center bg-[#2b579a] text-[11px] text-white">
      <button type="button" aria-label="Customize toolbar" className="ml-[30px] w-2.5">
        <svg viewBox="0 0 10 8" className="h-2 w-2.5" aria-hidden="true">
          <path d="M2.500 1.500h5" stroke="#fff" />
          <path d="M2.500 4h5L5 7z" fill="#fff" />
        </svg>
      </button>
      <h1 className="font-['Noto_Sans',sans-serif]">Docuxplorer 2020 - Enterprise</h1>
      <div className="flex items-center justify-end gap-7 pr-[15px]">
        <button type="button" aria-label="Ribbon display options">
          <svg viewBox="0 0 16 16" className="size-4" aria-hidden="true">
            <path d="M1.500 3.500h13v9h-13zM1.500 5.500h13" fill="none" stroke="#fff" />
            <path d="M8 12V7.500M6 9.500l2-2 2 2" fill="none" stroke="#fff" strokeWidth="1.300" />
          </svg>
        </button>
        <button type="button" aria-label="Minimize">
          <svg viewBox="0 0 16 16" className="size-4" aria-hidden="true">
            <path d="M3.500 11h9v2h-9z" fill="#fff" />
          </svg>
        </button>
        <button type="button" aria-label="Maximize">
          <svg viewBox="0 0 16 16" className="size-4" aria-hidden="true">
            <path d="M3.500 4.500h9v8h-9z" fill="none" stroke="#fff" />
            <path d="M3 3h10v3H3z" fill="#fff" />
          </svg>
        </button>
        <button type="button" aria-label="Close">
          <svg viewBox="0 0 16 16" className="size-4" aria-hidden="true">
            <path d="m4 4 8 8M12 4l-8 8" stroke="#fff" strokeWidth="2.400" />
          </svg>
        </button>
      </div>
    </div>
  )
}

function StatusBar() {
  return (
    <footer className="grid h-[25px] shrink-0 grid-cols-[437fr_541fr_266fr] items-center bg-[#f3f2f1] text-[#333]">
      <span className="flex items-center gap-[3px] pl-px">
        <HelpIcon />
        Press F1 for help
      </span>
      <span>10 item(s) found, 1 selected</span>
      <span className="flex items-center gap-[3px]">
        <UserIcon />
        Current User:
      </span>
    </footer>
  )
}

export default function App() {
  return (
    <div className="relative flex h-screen flex-col overflow-hidden border-r border-b border-l border-[#2b579a] bg-white font-['DejaVu_Sans',sans-serif] text-[13px]">
      <TitleBar />
      <Ribbon />
      <div className="flex min-h-0 flex-1">
        <Sidebar />
        <Splitter />
        <MainPanel />
      </div>
      <StatusBar />
      <ContextMenu />
    </div>
  )
}
